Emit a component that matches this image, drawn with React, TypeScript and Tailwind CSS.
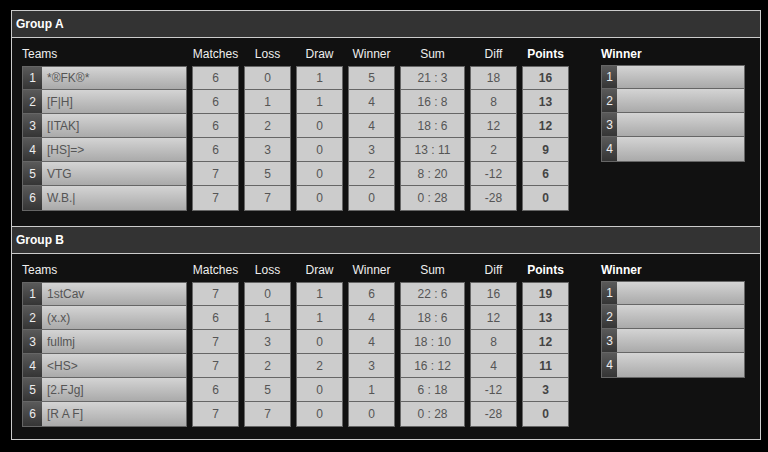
type Team = {
  name: string;
  matches: number;
  loss: number;
  draw: number;
  winner: number;
  sum: string;
  diff: number;
  points: number;
};

const groups: { title: string; pb: string; teams: Team[] }[] = [
  {
    title: 'Group A',
    pb: 'pb-[15px]',
    teams: [
      { name: '*®FK®*', matches: 6, loss: 0, draw: 1, winner: 5, sum: '21 : 3', diff: 18, points: 16 },
      { name: '[F|H]', matches: 6, loss: 1, draw: 1, winner: 4, sum: '16 : 8', diff: 8, points: 13 },
      { name: '[ITAK]', matches: 6, loss: 2, draw: 0, winner: 4, sum: '18 : 6', diff: 12, points: 12 },
      { name: '[HS]=>', matches: 6, loss: 3, draw: 0, winner: 3, sum: '13 : 11', diff: 2, points: 9 },
      { name: 'VTG', matches: 7, loss: 5, draw: 0, winner: 2, sum: '8 : 20', diff: -12, points: 6 },
      { name: 'W.B.|', matches: 7, loss: 7, draw: 0, winner: 0, sum: '0 : 28', diff: -28, points: 0 },
    ],
  },
  {
    title: 'Group B',
    pb: 'pb-[12px]',
    teams: [
      { name: '1stCav', matches: 7, loss: 0, draw: 1, winner: 6, sum: '22 : 6', diff: 16, points: 19 },
      { name: '(x.x)', matches: 6, loss: 1, draw: 1, winner: 4, sum: '18 : 6', diff: 12, points: 13 },
      { name: 'fullmj', matches: 7, loss: 3, draw: 0, winner: 4, sum: '18 : 10', diff: 8, points: 12 },
      { name: '<HS>', matches: 7, loss: 2, draw: 2, winner: 3, sum: '16 : 12', diff: 4, points: 11 },
      { name: '[2.FJg]', matches: 6, loss: 5, draw: 0, winner: 1, sum: '6 : 18', diff: -12, points: 3 },
      { name: '[R A F]', matches: 7, loss: 7, draw: 0, winner: 0, sum: '0 : 28', diff: -28, points: 0 },
    ],
  },
];

const columns: { label: string; key: keyof Team; width: string; bold?: boolean }[] = [
  { label: 'Matches', key: 'matches', width: 'w-[47px]' },
  { label: 'Loss', key: 'loss', width: 'w-[47px]' },
  { label: 'Draw', key: 'draw', width: 'w-[47px]' },
  { label: 'Winner', key: 'winner', width: 'w-[47px]' },
  { label: 'Sum', key: 'sum', width: 'w-[65px]' },
  { label: 'Diff', key: 'diff', width: 'w-[47px]' },
  { label: 'Points', key: 'points', width: 'w-[47px]', bold: true },
];

function Heading({ children, bold, center }: { children: string; bold?: boolean; center?: boolean }) {
  return (
    <div
      className={`h-[20px] leading-[20px] mb-[2px] whitespace-nowrap ${center ? 'text-center' : ''} ${
        bold ? 'font-bold text-white' : 'text-[#eeeeee]'
      }`}
    >
      {children}
    </div>
  );
}

function NumberBox({ n, width }: { n: number; width: string }) {
  return (
    <div
      className={`${width} h-full flex items-center justify-center bg-gradient-to-b from-[#5a5a5a] to-[#353535] text-[#eeeeee]`}
    >
      {n}
    </div>
  );
}

// rows are 24px apart; divide-y puts the 1px line inside each row after the first
const rowClass = 'h-[24px] first:h-[23px]';

function GroupTable({ title, pb, teams }: { title: string; pb: string; teams: Team[] }) {
  return (
    <section>
      <div className="h-[27px] flex items-center px-[4px] bg-[#333333] border-b border-[#cccccc] font-bold text-white">
        {title}
      </div>
      <div className={`bg-[#111111] pl-[10px] pt-[6px] ${pb} flex`}>
        {/* Teams */}
        <div className="w-[165px]">
          <Heading>Teams</Heading>
          <div className="border border-[#666666] divide-y divide-[#666666]">
            {teams.map((t, i) => (
              <div key={t.name} className={`${rowClass} flex items-center`}>
                <NumberBox n={i + 1} width="w-[19px]" />
                <div className="flex-1 h-full flex items-center pl-[5px] bg-gradient-to-b from-[#d4d4d4] to-[#aaaaaa] text-[#555555] whitespace-nowrap">
                  {t.name}
                </div>
              </div>
            ))}
          </div>
        </div>

        {/* stats */}
        {columns.map((c) => (
          <div key={c.label} className={`${c.width} ml-[5px]`}>
            <Heading bold={c.bold} center>
              {c.label}
            </Heading>
            <div className="border border-[#666666] divide-y divide-[#666666] bg-[#cccccc]">
              {teams.map((t) => (
                <div
                  key={t.name}
                  className={`${rowClass} flex items-center justify-center ${
                    c.bold ? 'font-bold text-[#444444]' : 'text-[#555555]'
                  }`}
                >
                  {t[c.key]}
                </div>
              ))}
            </div>
          </div>
        ))}

        {/* Winner */}
        <div className="w-[144px] ml-[32px]">
          <Heading bold>Winner</Heading>
          <div className="-mt-px border border-[#666666] divide-y divide-[#666666]">
            {[1, 2, 3, 4].map((n) => (
              <div key={n} className={`${rowClass} flex`}>
                <NumberBox n={n} width="w-[15px]" />
                <div className="flex-1 bg-gradient-to-b from-[#d4d4d4] to-[#aaaaaa]" />
              </div>
            ))}
          </div>
        </div>
      </div>
    </section>
  );
}

export default function App() {
  return (
    <div
      className="w-[768px] h-[452px] bg-black pt-[10px] pl-[11px] text-[12px]"
      style={{ fontFamily: '"Liberation Sans", Arial, sans-serif' }}
    >
      <div className="w-[750px] border border-[#cccccc] bg-[#111111]">
        {groups.map((g, i) => (
          <div key={g.title} className={i > 0 ? 'border-t border-[#cccccc]' : ''}>
            <GroupTable title={g.title} pb={g.pb} teams={g.teams} />
          </div>
        ))}
      </div>
    </div>
  );
}
